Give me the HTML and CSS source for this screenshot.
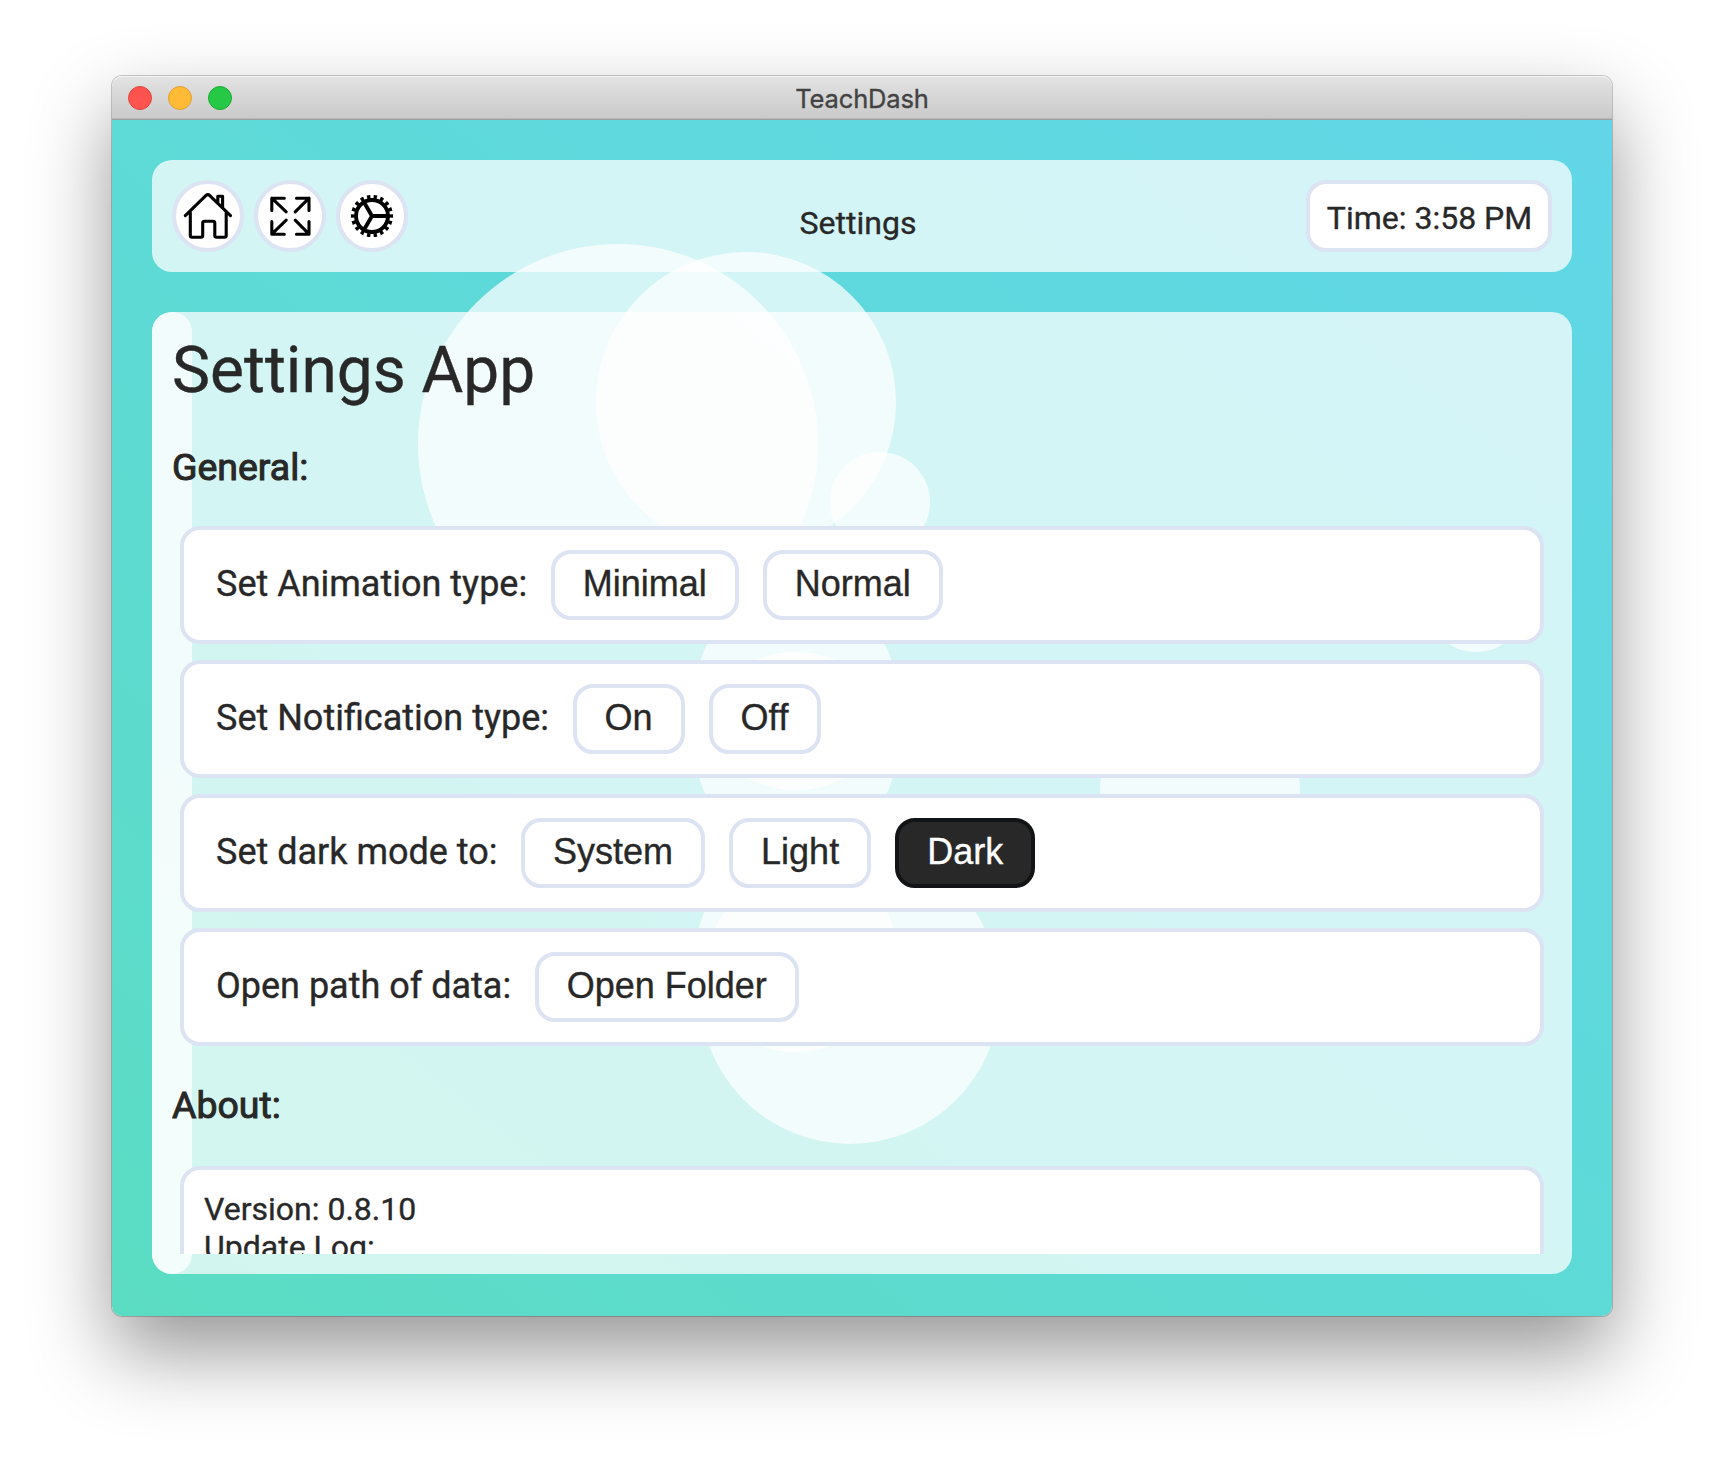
FILE: index.html
```html
<!DOCTYPE html>
<html lang="en">
<head>
<meta charset="utf-8">
<title>TeachDash</title>
<link rel="stylesheet" href="styles.css">
</head>
<body>
<div class="window">
  <div class="titlebar">
    <div class="lights">
      <span class="light close"></span>
      <span class="light minimize"></span>
      <span class="light maximize"></span>
    </div>
    <span class="window-title">TeachDash</span>
  </div>
  <div class="app">
    <svg class="bubbles" width="1500" height="1196" viewBox="0 0 1500 1196" aria-hidden="true">
      <circle cx="506" cy="324" r="200"/>
      <circle cx="634" cy="282" r="150"/>
      <circle cx="768" cy="382" r="50"/>
      <circle cx="684" cy="570" r="100"/>
      <circle cx="684" cy="632" r="100"/>
      <circle cx="684" cy="832" r="100"/>
      <circle cx="738" cy="874" r="150"/>
      <circle cx="1088" cy="670" r="100"/>
      <circle cx="1364" cy="482" r="50"/>
    </svg>
    <header class="topbar">
      <nav class="nav">
        <button class="icon-button" aria-label="Home">
          <svg viewBox="0 0 64 64"><path d="M9.3 31.7 29.8 11.6q2-1.8 4 0L54.5 31.7M14.3 28.5V51.6q0 1.700 1.700 1.700H25q1.700 0 1.700-1.700V39q0-1.800 1.800-1.800H37q1.800 0 1.800 1.800V51.600q0 1.700 1.700 1.700H48.500q1.700 0 1.700-1.700V28.500M41.800 18.500V12.200H46.600V23.500"/></svg>
        </button>
        <button class="icon-button" aria-label="Fullscreen">
          <svg viewBox="0 0 64 64"><path d="M13.800 26.500V14.200H26.300M13.800 14.200 28.200 27.800M37.200 27.800 51 14.200M38.500 14.200H51V26.500M13.800 37.500V50.200H26.300M13.800 50.200 28.200 36.200M37.200 36.200 51 50.200M38.500 50.200H51V37.500"/></svg>
        </button>
        <button class="icon-button" aria-label="Settings">
          <svg viewBox="0 0 64 64"><circle class="ring" cx="32" cy="32" r="16"/><circle class="teeth" cx="32" cy="32" r="19" pathLength="18"/><path class="spokes" d="M32 32H47M32 32 24.300 18.700M32 32 24.300 45.300"/></svg>
        </button>
      </nav>
      <span class="page-title">Settings</span>
      <div class="clock">Time: 3:58 PM</div>
    </header>
    <main class="panel">
      <div class="sidebar"></div>
      <div class="scroll">
        <h1>Settings App</h1>
        <h3>General:</h3>
        <div class="cards">
          <div class="card"><span class="label">Set Animation type:</span><button class="option">Minimal</button><button class="option">Normal</button></div>
          <div class="card"><span class="label">Set Notification type:</span><button class="option">On</button><button class="option">Off</button></div>
          <div class="card"><span class="label">Set dark mode to:</span><button class="option">System</button><button class="option">Light</button><button class="option dark">Dark</button></div>
          <div class="card"><span class="label">Open path of data:</span><button class="option">Open Folder</button></div>
        </div>
        <h3>About:</h3>
        <div class="about">Version: 0.8.10<br>Update Log:</div>
      </div>
    </main>
  </div>
</div>
</body>
</html>
```
FILE: styles.css
```css
* { box-sizing: border-box; }
html, body { height: 100%; }
body {
  margin: 0;
  padding: 76px 112px 148px;
  background: #fff;
  overflow: hidden;
  color: #282828;
  font-family: Roboto, sans-serif;
  -webkit-text-stroke: .35px;
}
.window {
  height: 1240px;
  display: flex;
  flex-direction: column;
  border-radius: 10px;
  box-shadow: 0 0 0 1px rgba(0, 0, 0, .2), 0 36px 80px rgba(0, 0, 0, .41);
}
.titlebar {
  height: 44px;
  display: grid;
  grid-template-columns: 1fr auto 1fr;
  align-items: center;
  padding: 0 16px;
  border-radius: 10px 10px 0 0;
  background: linear-gradient(#e3e3e3, #c9c9c9);
  box-shadow: inset 0 1px #f4f4f4, inset 0 -1px #9d9d9d, inset 0 -2px #b9b9b9;
}
.lights { display: flex; gap: 16px; }
.light { width: 24px; height: 24px; border-radius: 50%; border: 1px solid; }
.close { background: #ff534f; border-color: #e2443f; }
.minimize { background: #ffbb36; border-color: #dfa034; }
.maximize { background: #25c945; border-color: #1dab32; }
.window-title { padding-top: 2px; font: 25.5px/42px Inter, sans-serif; letter-spacing: -.15px; color: #434343; }

.app {
  position: relative;
  flex: 1;
  min-height: 0;
  display: flex;
  flex-direction: column;
  gap: 40px;
  padding: 40px 40px 42px;
  overflow: hidden;
  border-radius: 0 0 10px 10px;
  background: linear-gradient(to top right, #5bddc3, #5ed9da 58%, #5fd8df 75%, #62d6e8);
}
.bubbles { position: absolute; inset: 0; fill: rgba(255, 255, 255, .73); }
.topbar {
  position: relative;
  height: 112px;
  display: flex;
  justify-content: space-between;
  align-items: center;
  padding: 20px;
  border-radius: 20px;
  background: rgba(255, 255, 255, .73);
  font-size: 32px;
}
.nav { display: flex; gap: 10px; }
.icon-button {
  width: 72px;
  height: 72px;
  padding: 0;
  border: 4px solid #dce3f3;
  border-radius: 50%;
  background: #fff;
}
.icon-button svg {
  display: block;
  width: 64px;
  height: 64px;
  fill: none;
  stroke: #000;
  stroke-width: 3.1;
  stroke-linecap: round;
  stroke-linejoin: round;
}
.icon-button .ring { stroke-width: 3.9; }
.icon-button .teeth { stroke-width: 4.2; stroke-linecap: butt; stroke-dasharray: .5 .5; stroke-dashoffset: .25; }
.icon-button .spokes { stroke-width: 3.9; }
.page-title { padding: 13px 0 0 2px; line-height: 38px; }
.clock {
  width: 246px;
  height: 72px;
  border: 4px solid #dce3f3;
  border-radius: 20px;
  background: #fff;
  text-align: center;
  line-height: 68px;
  text-indent: 1px;
}

.panel {
  position: relative;
  flex: 1;
  min-height: 0;
  padding: 20px;
  border-radius: 20px;
  background: rgba(255, 255, 255, .73);
}
.sidebar {
  position: absolute;
  inset: 0 auto 0 0;
  width: 40px;
  border-radius: 20px;
  background: rgba(255, 255, 255, .73);
}
.scroll { position: relative; height: 100%; overflow: hidden; }
h1 { margin: 0; font-size: 64px; line-height: 77px; font-weight: 400; }
h3 {
  margin: 37px 0;
  font-size: 37.44px;
  line-height: 43px;
  font-weight: 400;
  -webkit-text-stroke: 1px #282828;
}
.cards { display: flex; flex-direction: column; gap: 16px; margin-bottom: 38px; padding: 0 8px; }
.card {
  height: 118px;
  display: flex;
  align-items: baseline;
  padding: 20px 32px;
  border: 4px solid #dce3f3;
  border-radius: 20px;
  background: #fff;
  font-size: 36px;
}
.option {
  height: 70px;
  margin-right: 24px;
  padding: 0 28px 2px;
  border: 4px solid #dce3f3;
  border-radius: 20px;
  background: #fff;
  color: #282828;
  font: 36px "Liberation Sans", Arial, sans-serif;
  font-kerning: none;
  -webkit-text-stroke: .35px;
}
.option.dark { background: #282828; border-color: #131416; color: #fff; }
.label { margin-right: 23.5px; }
.about {
  height: 400px;
  margin: 39px 8px 0;
  padding: 20px;
  border: 4px solid #dce3f3;
  border-radius: 20px;
  background: #fff;
  font-size: 32px;
  line-height: 38px;
}
```
